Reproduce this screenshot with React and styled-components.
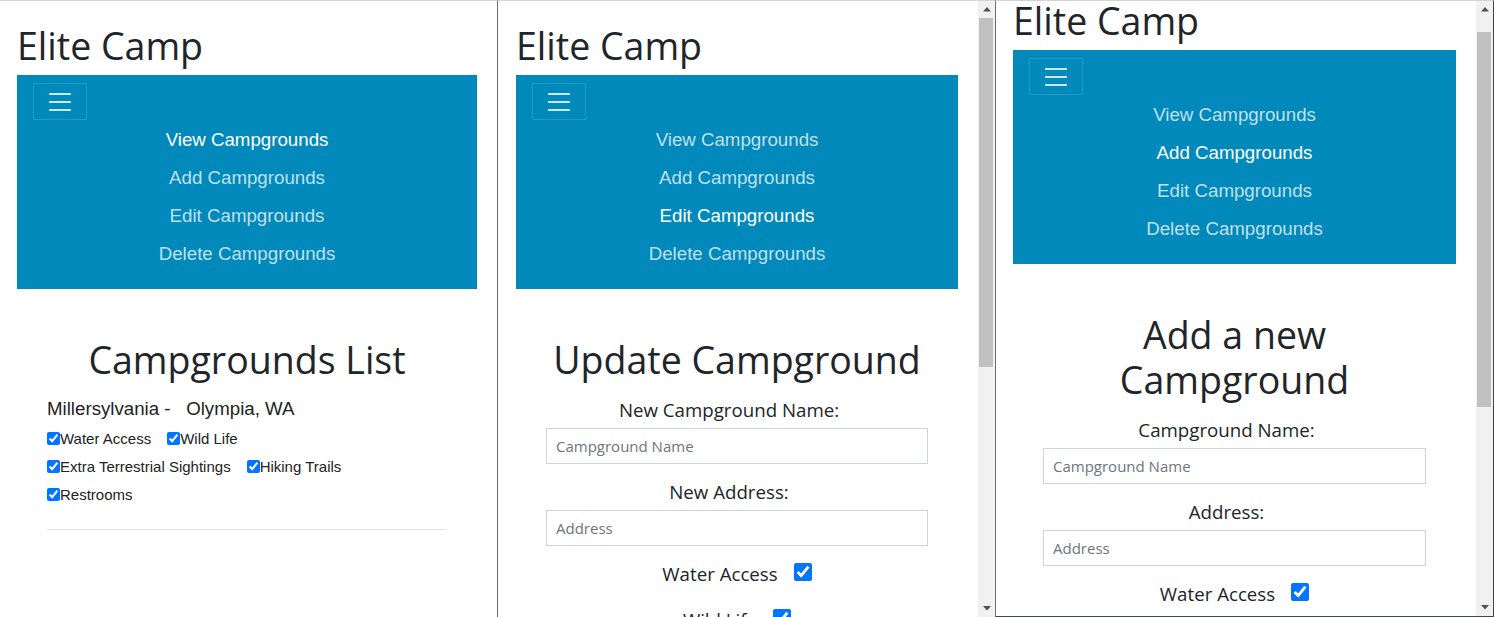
import React from 'react';
import styled, { createGlobalStyle } from 'styled-components';

const NAV_ITEMS = ['View Campgrounds', 'Add Campgrounds', 'Edit Campgrounds', 'Delete Campgrounds'];
const LIST_ROWS = [
  ['Water Access', 'Wild Life'],
  ['Extra Terrestrial Sightings', 'Hiking Trails'],
  ['Restrooms'],
];

const GlobalStyle = createGlobalStyle`
  * { box-sizing: border-box; }
  html, body { margin: 0; padding: 0; background: #fff; }
  body {
    width: 1494px;
    height: 617px;
    overflow: hidden;
    font-family: "Open Sans", "Liberation Sans", sans-serif;
    color: #212529;
  }
`;

const Desktop = styled.div`
  display: flex;
  width: 1494px;
  height: 617px;
  overflow: hidden;
`;

const Window = styled.div`
  display: flex;
  flex: 0 0 ${(p) => p.$width}px;
  height: 617px;
  background: #fff;
  border-top: 1px solid #d4d4d4;
  border-right: 1px solid ${(p) => (p.$edge ? '#3c4650' : '#6e6e6e')};
  border-bottom: ${(p) => (p.$edge ? '1px solid #3c4650' : '0')};
  overflow: hidden;
`;

const Viewport = styled.div`
  flex: 1;
  min-width: 0;
  overflow: hidden;
`;

const Page = styled.div`
  margin-top: ${(p) => -p.$scroll}px;
  padding: 0 20px 0 ${(p) => p.$inset}px;
`;

const Brand = styled.h1`
  margin: 22px 0 7px;
  font: 400 37.5px/1.2 "Open Sans", sans-serif;
  color: #212529;
`;

const Navbar = styled.nav`
  background: #0089ba;
  padding: 8px 16px 17px;
`;

const Toggler = styled.button`
  display: flex;
  align-items: center;
  justify-content: center;
  width: 54px;
  height: 37px;
  padding: 0;
  background: transparent;
  border: 1px solid rgba(255, 255, 255, 0.14);
  border-radius: 1px;
`;

const NavList = styled.ul`
  list-style: none;
  margin: 0;
  padding: 0;
  text-align: center;
`;

const NavLink = styled.a`
  display: block;
  padding: 9px 0 7px;
  font: 400 18.7px/22px "Liberation Sans", Arial, sans-serif;
  color: ${(p) => (p.$active ? '#ffffff' : 'rgba(255, 255, 255, 0.76)')};
  text-decoration: none;
`;

const Content = styled.main`
  padding: 0 30px;
`;

const Heading = styled.h2`
  margin: 48px 0 0;
  font: 400 37.5px/1.2 "Open Sans", sans-serif;
  text-align: center;
  color: #212529;
`;

const Camp = styled.section`
  margin-top: 16px;
  font-family: "Liberation Sans", Arial, sans-serif;
`;

const CampTitle = styled.div`
  font-size: 18.7px;
  line-height: 21.5px;
  color: #222;
`;

const FeatureList = styled.div`
  margin-top: 5px;
`;

const FeatureRow = styled.div`
  display: flex;
  align-items: center;
  height: 28px;
`;

const Feature = styled.label`
  display: inline-flex;
  align-items: center;
  margin-right: 16px;
  font-size: 15px;
  color: #222;
`;

const SmallBox = styled.input`
  width: 13px;
  height: 13px;
  margin: 0;
`;

const Rule = styled.hr`
  margin: 20px 0 0;
  border: 0;
  border-top: 1px solid #e2e2e2;
`;

const Field = styled.div`
  margin-top: 14px;
`;

const FieldLabel = styled.label`
  display: block;
  margin-bottom: 4px;
  padding-right: 16px;
  font: 400 18.7px/28px "Open Sans", sans-serif;
  text-align: center;
  color: #212529;
`;

const TextInput = styled.input`
  display: block;
  width: 100%;
  height: 36px;
  padding: 0 9px;
  border: 1px solid #cfd4d9;
  border-radius: 0;
  font: 400 15px "Open Sans", sans-serif;
  color: #495057;
  &::placeholder {
    color: #6c757d;
  }
`;

const CheckRow = styled.label`
  display: flex;
  align-items: center;
  justify-content: center;
  gap: 16px;
  margin-top: 14px;
  font: 400 18.7px/28px "Open Sans", sans-serif;
  color: #212529;
  & + & {
    margin-top: 18px;
  }
`;

const BigBox = styled.input`
  width: 18px;
  height: 18px;
  margin: -5px 0 0;
`;

const Scrollbar = styled.div`
  display: flex;
  flex-direction: column;
  flex: 0 0 17px;
  background: #f1f1f1;
`;

const ArrowButton = styled.div`
  display: flex;
  align-items: center;
  justify-content: center;
  height: 17px;
  flex: 0 0 17px;
`;

const Track = styled.div`
  flex: 1;
`;

const Thumb = styled.div`
  height: ${(p) => p.$height}px;
  margin: ${(p) => p.$offset}px 2px 0 1px;
  background: #c1c1c1;
`;

function HamburgerIcon() {
  return (
    <svg width="22" height="18" viewBox="0 0 22 18">
      <path d="M0 1h22M0 9h22M0 17h22" stroke="rgba(255,255,255,0.8)" strokeWidth="1.9" />
    </svg>
  );
}

function Arrow({ down }) {
  return (
    <svg width="8" height="5" viewBox="0 0 8 5">
      <polygon points={down ? '0,0 8,0 4,4.5' : '0,4.5 8,4.5 4,0'} fill="#505050" />
    </svg>
  );
}

function ScrollBar({ offset, height }) {
  return (
    <Scrollbar>
      <ArrowButton>
        <Arrow />
      </ArrowButton>
      <Track>
        <Thumb $offset={offset} $height={height} />
      </Track>
      <ArrowButton>
        <Arrow down />
      </ArrowButton>
    </Scrollbar>
  );
}

function Header({ active }) {
  return (
    <>
      <Brand>Elite Camp</Brand>
      <Navbar>
        <Toggler aria-label="Toggle navigation">
          <HamburgerIcon />
        </Toggler>
        <NavList>
          {NAV_ITEMS.map((item, i) => (
            <li key={item}>
              <NavLink href="#" $active={i === active}>
                {item}
              </NavLink>
            </li>
          ))}
        </NavList>
      </Navbar>
    </>
  );
}

function CampgroundList() {
  return (
    <Content>
      <Heading>Campgrounds List</Heading>
      <Camp>
        <CampTitle>Millersylvania -&nbsp;&nbsp;&nbsp;Olympia, WA</CampTitle>
        <FeatureList>
          {LIST_ROWS.map((row) => (
            <FeatureRow key={row[0]}>
              {row.map((f) => (
                <Feature key={f}>
                  <SmallBox type="checkbox" defaultChecked />
                  {f}
                </Feature>
              ))}
            </FeatureRow>
          ))}
        </FeatureList>
        <Rule />
      </Camp>
    </Content>
  );
}

// only the options that are inside the visible part of the window are rendered
function CampgroundForm({ title, nameLabel, addressLabel, features }) {
  return (
    <Content>
      <Heading>{title}</Heading>
      <Field>
        <FieldLabel>{nameLabel}</FieldLabel>
        <TextInput placeholder="Campground Name" />
      </Field>
      <Field>
        <FieldLabel>{addressLabel}</FieldLabel>
        <TextInput placeholder="Address" />
      </Field>
      {features.map((f) => (
        <CheckRow key={f}>
          {f}
          <BigBox type="checkbox" defaultChecked />
        </CheckRow>
      ))}
    </Content>
  );
}

export default function App() {
  return (
    <>
      <GlobalStyle />
      <Desktop>
        <Window $width={498}>
          <Viewport>
            <Page $scroll={0} $inset={17}>
              <Header active={0} />
              <CampgroundList />
            </Page>
          </Viewport>
        </Window>

        <Window $width={498}>
          <Viewport>
            <Page $scroll={0} $inset={18}>
              <Header active={2} />
              <CampgroundForm
                title="Update Campground"
                nameLabel="New Campground Name:"
                addressLabel="New Address:"
                features={['Water Access', 'Wild Life']}
              />
            </Page>
          </Viewport>
          <ScrollBar offset={0} height={349} />
        </Window>

        <Window $width={498} $edge>
          <Viewport>
            <Page $scroll={25} $inset={17}>
              <Header active={1} />
              <CampgroundForm
                title="Add a new Campground"
                nameLabel="Campground Name:"
                addressLabel="Address:"
                features={['Water Access']}
              />
            </Page>
          </Viewport>
          <ScrollBar offset={14} height={375} />
        </Window>
      </Desktop>
    </>
  );
}
